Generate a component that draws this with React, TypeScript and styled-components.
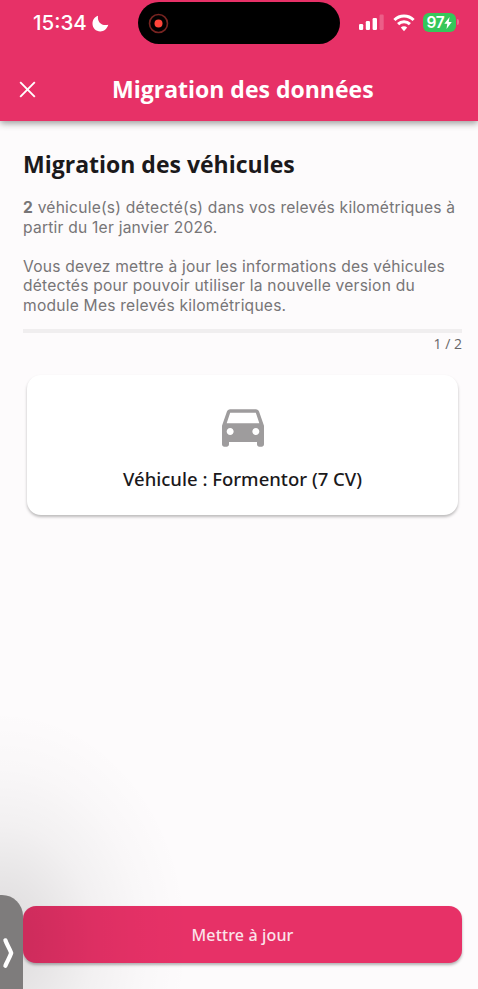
import React from "react";
import styled, { createGlobalStyle } from "styled-components";

const GlobalStyle = createGlobalStyle`
  * { box-sizing: border-box; }
  body { margin: 0; background: #fdfbfc; }
  h1, h2, p { margin: 0; }
`;

const Screen = styled.div`
  position: relative;
  display: flex;
  flex-direction: column;
  width: 478px;
  height: 989px;
  overflow: hidden;
  background: #fdfbfc;
  font-family: "Open Sans", sans-serif;
  color: #1b191b;
`;

const Header = styled.header`
  height: 121px;
  flex: none;
  background: #e73167;
  box-shadow: 0 2px 7px rgba(0, 0, 0, 0.42);
  color: #fff;
`;

const StatusBar = styled.div`
  display: grid;
  grid-template-columns: 137.5px 202.5px 138px;
  height: 46px;
  padding-top: 2px;
`;

const Clock = styled.div`
  display: flex;
  align-items: center;
  gap: 5px;
  height: 42px;
  padding-left: 33px;
  font: 500 20.5px/42px Inter, sans-serif;
`;

const Island = styled.div`
  height: 42px;
  padding: 10.5px 0 0 10.5px;
  border-radius: 21px;
  background: #000;
`;

const Indicators = styled.div`
  display: flex;
  align-items: flex-start;
  padding: 10px 0 0 17px;
`;

const Wifi = styled.div`
  display: flex;
  margin: 2px 0 0 8.5px;
`;

const Battery = styled.div`
  display: flex;
  align-items: center;
  justify-content: center;
  width: 33px;
  height: 19px;
  margin: 1px 1px 0 8.5px;
  border-radius: 6px;
  background: #35c75a;
  font: 600 15.5px/19px Inter, sans-serif;
  letter-spacing: -0.3px;
`;

const BatteryCap = styled.div`
  width: 2px;
  height: 6px;
  margin-top: 7px;
  border-radius: 0 2px 2px 0;
  background: #ec6b92;
`;

const TitleBar = styled.div`
  display: grid;
  grid-template-columns: 112px 1fr;
  align-items: center;
  height: 75px;
`;

const CloseButton = styled.button`
  display: flex;
  width: 17px;
  margin: 11px 0 0 19px;
  padding: 0;
  border: 0;
  background: none;
  color: #fff;
`;

const PageTitle = styled.h1`
  margin-top: 11px;
  font-size: 23px;
  font-weight: 700;
  line-height: 30px;
  white-space: nowrap;
`;

const Content = styled.main`
  flex: 1;
  padding: 27px 16px 0 23px;
`;

const SectionTitle = styled.h2`
  font-size: 23px;
  font-weight: 700;
  line-height: 32px;
`;

const Description = styled.p`
  margin-top: 18px;
  color: #777577;
  font: 400 15.6px/19.5px Inter, sans-serif;
  letter-spacing: 0.22px;
  white-space: nowrap;

  & + & { margin-top: 19.5px; }
`;

const Count = styled.strong`
  font-weight: 700;
`;

const ProgressTrack = styled.div`
  height: 4px;
  margin-top: 14px;
  background: #f0eeef;
`;

const ProgressLabel = styled.div`
  color: #686668;
  font-size: 14px;
  line-height: 21px;
  text-align: right;
`;

const VehicleCard = styled.section`
  display: flex;
  flex-direction: column;
  align-items: center;
  width: 431px;
  height: 140px;
  margin: 21px 0 0 4px;
  padding-top: 25px;
  border-radius: 14px;
  background: #fff;
  box-shadow: 0 2px 3px rgba(0, 0, 0, 0.26);
`;

const VehicleName = styled.div`
  margin-top: 10px;
  font-family: "Noto Sans", sans-serif;
  font-size: 18.5px;
  font-weight: 500;
  line-height: 26px;
`;

const Footer = styled.footer`
  padding: 0 16px 26px 23px;
`;

const UpdateButton = styled.button`
  display: block;
  width: 439px;
  height: 57px;
  padding: 1px 0 0;
  border: 0;
  border-radius: 13px;
  background: #e73167;
  box-shadow: 0 2px 3px rgba(0, 0, 0, 0.3);
  color: #fbe3ea;
  font: 500 16px/56px "Noto Sans", sans-serif;
  letter-spacing: 0.15px;
`;

const CornerShade = styled.div`
  position: absolute;
  left: 0;
  bottom: 0;
  width: 220px;
  height: 290px;
  background: radial-gradient(
    ellipse 190px 230px at 0 240px,
    rgba(0, 0, 0, 0.135),
    rgba(0, 0, 0, 0.09) 25%,
    rgba(0, 0, 0, 0.045) 50%,
    rgba(0, 0, 0, 0.014) 75%,
    rgba(0, 0, 0, 0) 100%
  );
  pointer-events: none;
`;

const DrawerHandle = styled.div`
  position: absolute;
  left: 0;
  bottom: 0;
  width: 22.5px;
  height: 94px;
  padding: 41px 0 0 2px;
  border-top-right-radius: 21px;
  background: #7e7c7c;
`;

const MoonIcon = () => (
  <svg width="17" height="17" viewBox="0 0 17 17">
    <path d="M6 .7C5.1 6.8 9.3 11.2 16.3 9.8 15 14 11.9 16.5 8.3 16.5 3.9 16.5.5 13.1.5 8.8.5 4.8 2.6 1.9 6 .7Z" fill="#fff" />
  </svg>
);

const RecordIcon = () => (
  <svg width="21" height="21" viewBox="0 0 21 21">
    <circle cx="10.5" cy="10.5" r="9" fill="none" stroke="#782421" strokeWidth="1.6" />
    <circle cx="10.5" cy="10.5" r="4" fill="#ff453a" />
  </svg>
);

const SignalIcon = () => (
  <svg width="27" height="22" viewBox="0 0 27 22" fill="#fff">
    <rect x="2" y="12" width="4.2" height="6" rx="1.2" />
    <rect x="8.8" y="9" width="4.2" height="9" rx="1.2" />
    <rect x="15.6" y="6" width="4.4" height="12" rx="1.2" />
    <rect x="22.5" y="2.5" width="4.2" height="15.5" rx="1.2" opacity=".22" />
  </svg>
);

const WifiIcon = () => (
  <svg width="22" height="18" viewBox="0 0 22 18" fill="none" stroke="#fff" strokeWidth="3">
    <path d="M1.4 6a13.6 13.6 0 0 1 19.2 0" />
    <path d="M5.1 10.1a8.4 8.4 0 0 1 11.8 0" />
    <path d="M7.8 13.6a4.4 4.4 0 0 1 6.4 0L11 17.2Z" fill="#fff" stroke="none" />
  </svg>
);

const BoltIcon = () => (
  <svg width="8" height="12" viewBox="0 0 8 12">
    <path d="M5.6 0 .3 6.7h3L2.5 12 7.8 5.1H4.7Z" fill="#fff" />
  </svg>
);

const CloseIcon = () => (
  <svg width="17" height="17" viewBox="0 0 17 17" stroke="#fff" strokeWidth="1.9">
    <path d="m1.2 1.2 14.6 14.6M15.8 1.2 1.2 15.8" />
  </svg>
);

const CarIcon = () => (
  <svg width="56" height="56" viewBox="0 0 24 24" fill="#9e9c9d">
    <path d="M18.92 5.01C18.72 4.42 18.16 4 17.5 4h-11c-.66 0-1.21.42-1.42 1.01L3 11v8c0 .55.45 1 1 1h1c.55 0 1-.45 1-1v-1h12v1c0 .55.45 1 1 1h1c.55 0 1-.45 1-1v-8l-2.08-5.99zM6.5 15c-.83 0-1.5-.67-1.5-1.5S5.67 12 6.5 12s1.5.67 1.5 1.5S7.33 15 6.5 15zm11 0c-.83 0-1.5-.67-1.5-1.5s.67-1.5 1.5-1.5 1.5.67 1.5 1.5-.67 1.5-1.5 1.5zM5 10l1.5-4.5h11L19 10H5z" />
  </svg>
);

const ChevronIcon = () => (
  <svg width="13" height="34" viewBox="0 0 13 34">
    <path d="M3.4 4.3C5 9 7.4 11.6 9.2 17 7.4 22.4 5 25.5 3.4 29.8" fill="none" stroke="#fff" strokeWidth="4.2" strokeLinecap="round" strokeLinejoin="round" />
  </svg>
);

export default function App() {
  return (
    <Screen>
      <GlobalStyle />
      <Header>
        <StatusBar>
          <Clock>15:34<MoonIcon /></Clock>
          <Island><RecordIcon /></Island>
          <Indicators>
            <SignalIcon />
            <Wifi><WifiIcon /></Wifi>
            <Battery>97<BoltIcon /></Battery>
            <BatteryCap />
          </Indicators>
        </StatusBar>
        <TitleBar>
          <CloseButton aria-label="Fermer"><CloseIcon /></CloseButton>
          <PageTitle>Migration des données</PageTitle>
        </TitleBar>
      </Header>
      <Content>
        <SectionTitle>Migration des véhicules</SectionTitle>
        <Description>
          <Count>2</Count> véhicule(s) détecté(s) dans vos relevés kilométriques à<br />
          partir du 1er janvier 2026.
        </Description>
        <Description>
          Vous devez mettre à jour les informations des véhicules<br />
          détectés pour pouvoir utiliser la nouvelle version du<br />
          module Mes relevés kilométriques.
        </Description>
        <ProgressTrack />
        <ProgressLabel>1 / 2</ProgressLabel>
        <VehicleCard>
          <CarIcon />
          <VehicleName>Véhicule : Formentor (7 CV)</VehicleName>
        </VehicleCard>
      </Content>
      <Footer>
        <UpdateButton>Mettre à jour</UpdateButton>
      </Footer>
      <CornerShade />
      <DrawerHandle><ChevronIcon /></DrawerHandle>
    </Screen>
  );
}
